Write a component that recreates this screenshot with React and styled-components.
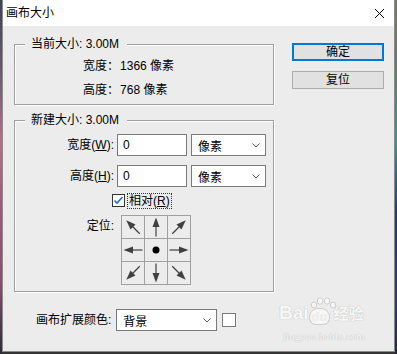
import React from "react";
import styled, { createGlobalStyle, css } from "styled-components";

const Global = createGlobalStyle`
  html, body { margin: 0; padding: 0; }
  body {
    width: 397px; height: 354px; overflow: hidden;
    background: #343434;
    font-family: "Liberation Sans", "Noto Sans CJK SC", sans-serif;
  }
`;

const Screen = styled.div`
  width: 397px; height: 354px; box-sizing: border-box;
  padding: 0 2px 2px 2px;
  background:
    linear-gradient(#3c4456, #6a5a70 20%, #b86e88 40%, #a05878 60%, #8a4e70 80%, #2c2c34) left top / 2px 100% no-repeat,
    linear-gradient(#7a7a5a, #6a7a60 15%, #2a9c8e 40%, #1c3c82 60%, #2a3a7a 85%, #202840) right top / 2px 100% no-repeat,
    #343434;
`;

const Dialog = styled.div`
  position: relative;
  width: 393px; height: 352px; box-sizing: border-box;
  border: 1px solid #8a8a8a; border-top: none;
  background: #ececec;
  display: flex; flex-direction: column;
  font-size: 12px; color: #000;
`;

const TitleBar = styled.div`
  height: 26px; flex: none; background: #fff;
  display: flex; align-items: center; justify-content: space-between;
  padding: 0 9px 0 3px;
`;

const Title = styled.span`
  font-size: 12px; line-height: 14px;
`;

const Body = styled.div`
  display: flex; gap: 18px;
  padding: 11px 10px 0 11px;
`;

const LeftCol = styled.div`
  width: 260px; display: flex; flex-direction: column;
`;

const RightCol = styled.div`
  width: 92px; padding-top: 6px;
  display: flex; flex-direction: column; gap: 10px;
`;

const Button = styled.div`
  height: 18px; box-sizing: border-box;
  display: flex; align-items: center; justify-content: center;
  background: #e1e1e1; border: 1px solid #adadad;
  font-size: 12px; line-height: 14px;
  ${(p) => p.$primary && css`border: 2px solid #0078d7;`}
`;

const Group = styled.div`
  position: relative;
  margin-top: ${(p) => p.$mt}px;
  height: ${(p) => p.$h}px; box-sizing: border-box;
  border: 1px solid #a0a0a0;
  box-shadow: inset 1px 1px 0 #fff, 1px 1px 0 #fff;
  display: flex; flex-direction: column;
`;

const GroupTitle = styled.span`
  position: absolute; top: -8px; left: 10px;
  padding: 0 8px 0 6px;
  background: #ececec;
  line-height: 14px; white-space: nowrap;
`;

const InfoRows = styled.div`
  padding: 9px 0 0 68px;
`;

const InfoRow = styled.div`
  height: 24px; line-height: 24px; white-space: nowrap;
`;

const FieldRow = styled.div`
  display: flex; align-items: center;
  margin-top: ${(p) => p.$mt}px;
  height: ${(p) => p.$h || 22}px;
`;

const FieldLabel = styled.span`
  width: 99px; flex: none; text-align: right;
  margin-right: ${(p) => p.$gap ?? 3}px;
  line-height: 14px; white-space: nowrap;
  align-self: ${(p) => (p.$top ? "flex-start" : "center")};
  margin-top: ${(p) => (p.$top ? 4 : 0)}px;
`;

const Input = styled.div`
  width: 70px; height: 22px; box-sizing: border-box;
  border: 1px solid #7a7a7a; background: #fff;
  padding-left: 5px; line-height: 20px;
`;

const Select = styled.div`
  width: ${(p) => p.$w}px; height: 22px; box-sizing: border-box; flex: none;
  margin-left: ${(p) => p.$ml || 0}px;
  border: 1px solid #7a7a7a; background: #fff;
  display: flex; align-items: center; justify-content: space-between;
  padding: 0 5px 0 6px;
`;

const CheckIndent = styled.div`
  width: 97px; flex: none;
`;

const CheckLabel = styled.span`
  margin-left: 2px;
  padding: 0 1px;
  border: 1px dotted #333;
  line-height: 14px; white-space: nowrap;
`;

const AnchorGrid = styled.div`
  display: grid;
  grid-template-columns: repeat(3, 22px);
  grid-auto-rows: 22px;
  gap: 1px; padding: 1px;
  background: #a0a0a0;
`;

const Cell = styled.div`
  background: #ececec;
  display: flex; align-items: center; justify-content: center;
`;

const BottomRow = styled.div`
  margin-top: 17px; padding-left: 22px;
  display: flex; align-items: center; gap: 5px;
`;

const BottomLabel = styled.span`
  line-height: 14px; white-space: nowrap;
`;

const Swatch = styled.div`
  width: 14px; height: 14px; box-sizing: border-box;
  border: 1px solid #7a7a7a; background: #fff; margin-left: 0px;
`;

const Watermark = styled.div`
  position: absolute; left: 276px; top: 302px;
  color: #f7f7f7;
  text-shadow: 0 0 1px #c4c4c4, 0 0 1px #c4c4c4;
  pointer-events: none;
`;

const WmTop = styled.div`
  display: flex; align-items: flex-end;
  font-family: "Liberation Sans", "Noto Sans CJK SC", sans-serif;
  font-weight: bold; font-size: 19px; line-height: 22px;
`;

const Paw = styled.span`
  position: relative; display: inline-flex; align-items: flex-end;
  margin: 0 2px 0 1px;
`;

const PawPad = styled.span`
  display: inline-block;
  background: #f7f7f7; color: #ececec;
  border-radius: 8px 8px 6px 6px;
  box-shadow: 0 0 0 1px #cdcdcd;
  text-shadow: none;
  font-size: 13px; line-height: 15px; padding: 0 2px;
`;

const PawToes = styled.svg`
  position: absolute; left: 0; top: -12px;
`;

const WmCn = styled.span`
  font-size: 15px; line-height: 20px; margin-left: 2px;
`;

const WmUrl = styled.div`
  font-family: "Liberation Serif", serif;
  font-size: 11px; line-height: 12px; margin-top: 6px; margin-left: 4px;
`;

const Chevron = () => (
  <svg width="8" height="5" viewBox="0 0 8 5">
    <polyline points="0.5,0.5 4,4 7.5,0.5" fill="none" stroke="#606060" strokeWidth="1" />
  </svg>
);

const CloseIcon = () => (
  <svg width="11" height="11" viewBox="0 0 11 11">
    <path d="M1 1 L10 10 M10 1 L1 10" stroke="#000" strokeWidth="1" />
  </svg>
);

const CheckBox = () => (
  <svg width="13" height="13" viewBox="0 0 13 13">
    <rect x="0.5" y="0.5" width="12" height="12" fill="#fff" stroke="#333" />
    <polyline points="2.5,6.5 5,9 10.5,3" fill="none" stroke="#1f6fd0" strokeWidth="1.6" />
  </svg>
);

const Arrow = ({ angle }) => (
  <svg width="22" height="22" viewBox="0 0 22 22">
    {angle === null ? (
      <circle cx="11" cy="11" r="3.5" fill="#000" />
    ) : (
      <g transform={`rotate(${angle} 11 11)`} fill="#404040" stroke="#404040">
        <line x1="1.5" y1="11" x2="12" y2="11" strokeWidth="1.2" />
        <polygon points="11,7.5 20.5,11 11,14.5" stroke="none" />
      </g>
    )}
  </svg>
);

const anchors = [-135, -90, -45, 180, null, 0, 135, 90, 45];

export default function App() {
  return (
    <>
      <Global />
      <Screen>
        <Dialog>
          <TitleBar>
            <Title>画布大小</Title>
            <CloseIcon />
          </TitleBar>
          <Body>
            <LeftCol>
              <Group $mt={7} $h={61}>
                <GroupTitle>当前大小: 3.00M</GroupTitle>
                <InfoRows>
                  <InfoRow>宽度：{"\u200A"}1366 像素</InfoRow>
                  <InfoRow>高度：{"\u200A"}768 像素</InfoRow>
                </InfoRows>
              </Group>
              <Group $mt={15} $h={172}>
                <GroupTitle>新建大小: 3.00M</GroupTitle>
                <FieldRow $mt={13}>
                  <FieldLabel>宽度(<u>W</u>):</FieldLabel>
                  <Input>0</Input>
                  <Select $w={75} $ml={4}>
                    <span>像素</span>
                    <Chevron />
                  </Select>
                </FieldRow>
                <FieldRow $mt={9}>
                  <FieldLabel>高度(<u>H</u>):</FieldLabel>
                  <Input>0</Input>
                  <Select $w={75} $ml={4}>
                    <span>像素</span>
                    <Chevron />
                  </Select>
                </FieldRow>
                <FieldRow $mt={5} $h={17}>
                  <CheckIndent />
                  <CheckBox />
                  <CheckLabel>相对(<u>R</u>)</CheckLabel>
                </FieldRow>
                <FieldRow $mt={6} $h={70}>
                  <FieldLabel $top $gap={7}>定位:</FieldLabel>
                  <AnchorGrid>
                    {anchors.map((a, i) => (
                      <Cell key={i}>
                        <Arrow angle={a} />
                      </Cell>
                    ))}
                  </AnchorGrid>
                </FieldRow>
              </Group>
              <BottomRow>
                <BottomLabel>画布扩展颜色:</BottomLabel>
                <Select $w={101}>
                  <span>背景</span>
                  <Chevron />
                </Select>
                <Swatch />
              </BottomRow>
            </LeftCol>
            <RightCol>
              <Button $primary>确定</Button>
              <Button>复位</Button>
            </RightCol>
          </Body>
          <Watermark>
            <WmTop>
              <span>Bai</span>
              <Paw>
                <PawToes width="26" height="12" viewBox="0 0 26 12">
                  <ellipse cx="4" cy="8" rx="2.6" ry="3" fill="#f7f7f7" stroke="#cdcdcd" />
                  <ellipse cx="10" cy="4" rx="2.8" ry="3.2" fill="#f7f7f7" stroke="#cdcdcd" />
                  <ellipse cx="17" cy="4" rx="2.8" ry="3.2" fill="#f7f7f7" stroke="#cdcdcd" />
                  <ellipse cx="23" cy="8" rx="2.6" ry="3" fill="#f7f7f7" stroke="#cdcdcd" />
                </PawToes>
                <PawPad>du</PawPad>
              </Paw>
              <WmCn>经验</WmCn>
            </WmTop>
            <WmUrl>jingyan.baidu.com</WmUrl>
          </Watermark>
        </Dialog>
      </Screen>
    </>
  );
}
